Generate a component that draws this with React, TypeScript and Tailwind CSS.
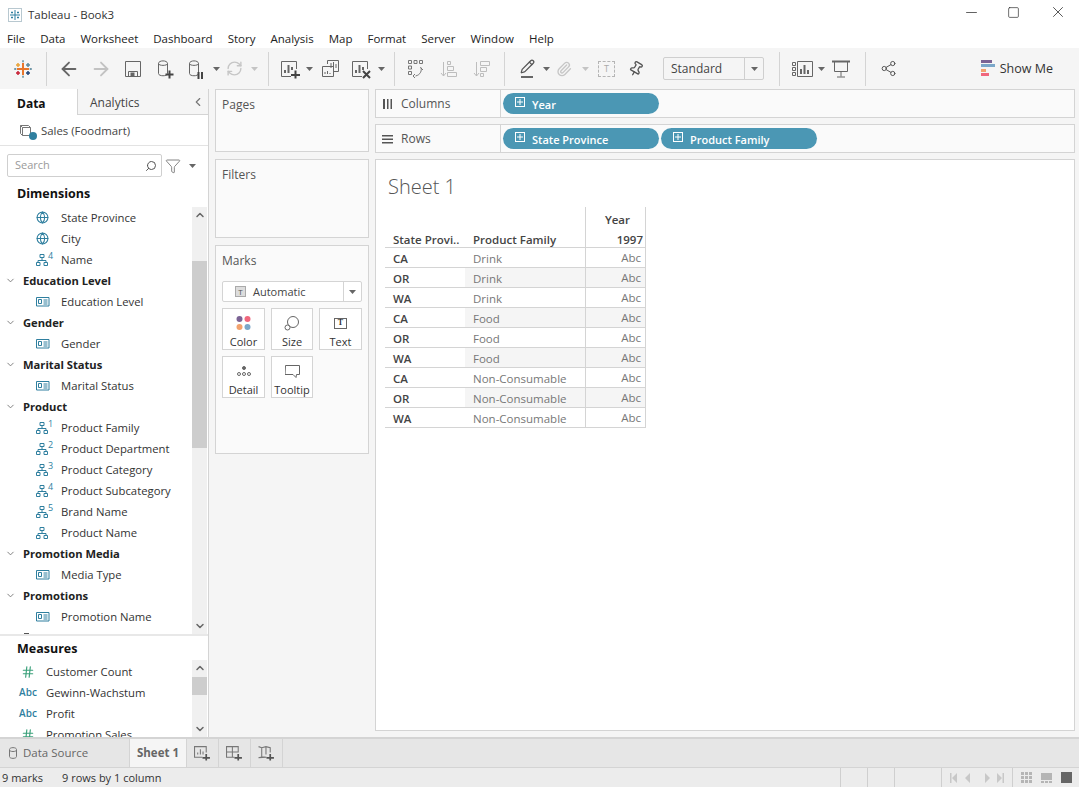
import { ChevronDown, ChevronLeft, ChevronUp, Minus, Square, X, Search, Filter, Globe, Hash, ArrowLeft, ArrowRight, RefreshCw, Pencil, Paperclip, Pin, Share2 } from 'lucide-react';

const font = { fontFamily: '"Open Sans", "Noto Sans", sans-serif' };

const Caret = ({ light }: { light?: boolean }) => (
  <svg width="7" height="4" viewBox="0 0 7 4" className="shrink-0"><path d="M0 0h7L3.500 4z" fill={light ? '#c4c4c4' : '#666'} /></svg>
);

const Sep = () => <div className="w-px h-[34px] bg-[#d4d4d4] shrink-0" />;

const Logo = () => (
  <svg width="18" height="18" viewBox="0 0 18 18" strokeWidth="1.500" fill="none">
    <path d="M9 3v12M3 9h12" stroke="#e8762b" strokeWidth="2" />
    <path d="M4 3v4M2 5h4" stroke="#e8a33a" />
    <path d="M14 3v4M12 5h4" stroke="#5b879b" />
    <path d="M4 11v4M2 13h4" stroke="#c72035" />
    <path d="M14 11v4M12 13h4" stroke="#1f447a" />
    <path d="M9 0v2.500M8 1.200h2M9 15.500V18M8 16.800h2" stroke="#7099a6" strokeWidth="1" />
    <path d="M0 9h2.500M1.200 8v2M15.500 9H18M16.800 8v2" stroke="#59879b" strokeWidth="1" />
  </svg>
);

const Snowflake = () => (
  <div className="w-[14px] h-[14px] border border-[#b8c8d0] bg-white flex items-center justify-center">
    <svg width="12" height="12" viewBox="0 0 12 12" stroke="#2f7f9f" strokeWidth="1" fill="none">
      <path d="M6 1v10M1 6h10M3 2.500v2M2 3.500h2M9 2.500v2M8 3.500h2M3 7.500v2M2 8.500h2M9 7.500v2M8 8.500h2" />
    </svg>
  </div>
);

const Cyl = ({ plus, pause }: { plus?: boolean; pause?: boolean }) => (
  <svg width="18" height="20" viewBox="0 0 18 20" fill="none" stroke="#666">
    <path d="M1.500 4.500c0-3.500 9-3.500 9 0v10c0 3-9 3-9 0zM1.500 4.500c0 2.500 9 2.500 9 0" />
    {plus && <path d="M8.500 15.500h8M12.500 11.500v8" stroke="#444" strokeWidth="2" />}
    {pause && <path d="M10.500 13v7M14 13v7" stroke="#444" strokeWidth="2" />}
  </svg>
);

const Bars = ({ mode }: { mode: 'plus' | 'x' | 'dup' }) => (
  <svg width="22" height="20" viewBox="0 0 22 20" fill="none" stroke="#666">
    {mode === 'dup' ? (
      <>
        <path d="M6.500 5V1.500h11v11H13" />
        <path d="M1.500 7.500h11v10h-11z" />
        <path d="M10 9V4M12.500 9V3M15 9V5M4 15v-2M6.500 15v-3M9 15v-1" />
      </>
    ) : (
      <>
        <path d="M11 17.500H1.500v-15h15V10" />
        <path d="M5 14v-3M8.500 14V6M12 11V8" strokeWidth="2" />
        {mode === 'plus' && <path d="M11 16h9M15.500 11.500v8" stroke="#444" strokeWidth="2" />}
        {mode === 'x' && <path d="M12 12l7 7M19 12l-7 7" stroke="#444" strokeWidth="2" />}
      </>
    )}
  </svg>
);

const SwapIcon = () => (
  <svg width="18" height="20" viewBox="0 0 18 20" fill="none" stroke="#777">
    <path d="M1.500 1.500h3v3h-3zM7 1.500h3v3H7zM12.500 1.500h3v3h-3zM1.500 7h3v3h-3zM1.500 12.500h3v3h-3zM13.500 8c2 3 0 8-5 9M8 19l-2-2 2-2M16 11l-2-2" />
  </svg>
);

const SortIcon = ({ flip }: { flip?: boolean }) => (
  <svg width="18" height="20" viewBox="0 0 18 20" fill="none" stroke="#bdbdbd">
    <path d="M3.500 3v14M1 14l2.500 3L6 14" />
    {flip ? (
      <path d="M7.500 2.500h9v4h-9zM7.500 8.500h6v4h-6zM7.500 14.500h3v3h-3z" />
    ) : (
      <path d="M7.500 2.500h3v3h-3zM7.500 7.500h6v4h-6zM7.500 13.500h9v4h-9z" />
    )}
  </svg>
);

const ShowMeChart = () => (
  <svg width="14" height="17" viewBox="0 0 14 17">
    <rect x="0" y="0" width="11" height="3" fill="#7b6394" />
    <rect x="0" y="4" width="14" height="3" fill="#7ba7c9" />
    <rect x="0" y="9" width="5" height="3" fill="#f2a26e" />
    <rect x="0" y="13" width="8" height="3" fill="#f0677d" />
  </svg>
);

const Hier = ({ n }: { n?: number }) => (
  <span className="relative w-[20px] h-[13px] flex items-end shrink-0">
    <svg width="12" height="12" viewBox="0 0 12 12" fill="none" stroke="#2f7f9f" strokeWidth="1">
      <path d="M4 .500h4v3H4zM.500 8.500h3.500v3H.500zM8 8.500h3.500v3H8zM6 3.500v3M2 8.500v-2h8v2" />
    </svg>
    {n && <span className="absolute left-[12px] -top-[2px] text-[9px] leading-[10px] text-[#2f7f9f]">{n}</span>}
  </span>
);

const Card = () => (
  <svg width="14" height="10" viewBox="0 0 14 10" fill="none" stroke="#2f7f9f" strokeWidth="1">
    <path d="M.500.500h12.500v8.500H.500zM2.500 2.500h3v4h-3zM7.500 3h4M7.500 5h4M7.500 7h4" />
  </svg>
);

type Field = { kind: 'group'; label: string } | { kind: 'globe' | 'card' | 'hier'; label: string; n?: number };

const dimensions: Field[] = [
  { kind: 'globe', label: 'State Province' },
  { kind: 'globe', label: 'City' },
  { kind: 'hier', label: 'Name', n: 4 },
  { kind: 'group', label: 'Education Level' },
  { kind: 'card', label: 'Education Level' },
  { kind: 'group', label: 'Gender' },
  { kind: 'card', label: 'Gender' },
  { kind: 'group', label: 'Marital Status' },
  { kind: 'card', label: 'Marital Status' },
  { kind: 'group', label: 'Product' },
  { kind: 'hier', label: 'Product Family', n: 1 },
  { kind: 'hier', label: 'Product Department', n: 2 },
  { kind: 'hier', label: 'Product Category', n: 3 },
  { kind: 'hier', label: 'Product Subcategory', n: 4 },
  { kind: 'hier', label: 'Brand Name', n: 5 },
  { kind: 'hier', label: 'Product Name' },
  { kind: 'group', label: 'Promotion Media' },
  { kind: 'card', label: 'Media Type' },
  { kind: 'group', label: 'Promotions' },
  { kind: 'card', label: 'Promotion Name' },
];

const measures = [
  { icon: 'hash', label: 'Customer Count' },
  { icon: 'abc', label: 'Gewinn-Wachstum' },
  { icon: 'abc', label: 'Profit' },
  { icon: 'hash', label: 'Promotion Sales' },
];

const rows = [
  ['CA', 'Drink'], ['OR', 'Drink'], ['WA', 'Drink'],
  ['CA', 'Food'], ['OR', 'Food'], ['WA', 'Food'],
  ['CA', 'Non-Consumable'], ['OR', 'Non-Consumable'], ['WA', 'Non-Consumable'],
];

const menu = ['File', 'Data', 'Worksheet', 'Dashboard', 'Story', 'Analysis', 'Map', 'Format', 'Server', 'Window', 'Help'];

const ScrollTrack = ({ thumbTop, thumbH }: { thumbTop: string; thumbH: string }) => (
  <div className="w-[15px] h-full bg-[#f0f0f0] flex flex-col items-center justify-between shrink-0 relative">
    <ChevronUp size={12} strokeWidth={3} color="#666" className="mt-[2px]" />
    <div className={`absolute left-0 w-full bg-[#cdcdcd] ${thumbTop} ${thumbH}`} />
    <ChevronDown size={12} strokeWidth={3} color="#666" className="mb-[2px]" />
  </div>
);

const Pill = ({ label }: { label: string }) => (
  <div className="w-[156px] h-[21px] rounded-full bg-[#4b97b4] flex items-center pl-[12px] text-white text-[11px] font-semibold">
    <span className="w-[10px] h-[10px] border border-white flex items-center justify-center mr-[7px] shrink-0 -mt-[3px]">
      <svg width="6" height="6" viewBox="0 0 6 6"><path d="M3 0v6M0 3h6" stroke="#fff" /></svg>
    </span>
    <span className="mt-[3px]">{label}</span>
  </div>
);

const Shelf = ({ icon, label, children }: { icon: React.ReactNode; label: string; children: React.ReactNode }) => (
  <div className="h-[29px] border border-[#d4d4d4] bg-[#fafafa] flex items-center">
    <div className="w-[125px] h-full border-r border-[#d4d4d4] flex items-center pl-[6px] gap-[8px] text-[12px] text-[#555] shrink-0">
      {icon}
      {label}
    </div>
    <div className="flex items-center gap-[2px] pl-[2px]">{children}</div>
  </div>
);

const MarkBtn = ({ label, children }: { label: string; children: React.ReactNode }) => (
  <div className="h-[42px] border border-[#d4d4d4] bg-white flex flex-col items-center text-[11px] text-[#333]">
    <div className="h-[26px] flex items-center justify-center pt-[2px]">{children}</div>
    <span className="leading-[14px]">{label}</span>
  </div>
);

export default function App() {
  return (
    <div className="w-[1079px] h-[787px] bg-[#f5f5f5] flex flex-col overflow-hidden text-[#333]" style={font}>
      {/* title + menu */}
      <div className="h-[30px] bg-white flex items-center pl-[8px] shrink-0">
        <Snowflake />
        <span className="ml-[6px] text-[11.500px] text-[#333]">Tableau - Book3</span>
        <div className="ml-auto flex items-center gap-[29px] pr-[12px] pb-[6px] text-[#222]">
          <span className="-mr-[2px] -ml-[2px] flex"><Minus size={17} strokeWidth={1} /></span>
          <Square size={13} strokeWidth={1.2} />
          <X size={18} strokeWidth={1} />
        </div>
      </div>
      <div className="h-[18px] bg-white flex items-center pl-[7px] gap-[15px] text-[11.500px] text-[#222] shrink-0">
        {menu.map((m) => <span key={m}>{m}</span>)}
      </div>

      {/* toolbar */}
      <div className="h-[41px] bg-[#f5f5f5] flex items-center shrink-0">
        <div className="w-[46px] flex justify-center"><Logo /></div>
        <Sep />
        <div className="flex items-center w-[221px]">
          <ArrowLeft size={22} color="#666" strokeWidth={2} className="ml-[11px]" />
          <ArrowRight size={22} color="#c2c2c2" strokeWidth={2} className="ml-[10px]" />
          <svg width="16" height="16" viewBox="0 0 16 16" fill="none" stroke="#666" className="ml-[13px]"><path d="M.500.500h15v15H.500zM3.500 15.500v-5h9v5" /><rect x="6" y="12" width="3" height="3" fill="#666" /></svg>
          <span className="ml-[16px] flex"><Cyl plus /></span>
          <span className="ml-[13px] flex"><Cyl pause /></span>
          <span className="ml-[7px]"><Caret /></span>
          <RefreshCw size={17} color="#c6c6c6" className="ml-[6px]" />
          <span className="ml-[8px]"><Caret light /></span>
        </div>
        <Sep />
        <div className="flex items-center pl-[11px] w-[125px]">
          <Bars mode="plus" />
          <span className="ml-[4px]"><Caret /></span>
          <span className="ml-[8px] flex"><Bars mode="dup" /></span>
          <span className="ml-[8px] flex"><Bars mode="x" /></span>
          <span className="ml-[5px]"><Caret /></span>
        </div>
        <Sep />
        <div className="flex items-center gap-[15px] pl-[12px] w-[109px]">
          <SwapIcon />
          <SortIcon />
          <SortIcon flip />
        </div>
        <Sep />
        <div className="flex items-center pl-[14px] w-[274px]">
          <div className="flex flex-col items-center w-[16px]">
            <Pencil size={15} color="#555" />
            <div className="w-[12px] h-[2px] bg-[#666] mt-[2px]" />
          </div>
          <span className="ml-[8px]"><Caret /></span>
          <Paperclip size={16} color="#c6c6c6" className="ml-[6px]" />
          <span className="ml-[10px]"><Caret light /></span>
          <div className="ml-[9px] w-[17px] h-[16px] border border-dashed border-[#b5b5b5] flex items-center justify-center text-[9px] text-[#aaa]">T</div>
          <Pin size={16} color="#555" className="ml-[13px] rotate-[30deg]" />
          <div className="ml-[19px] w-[101px] h-[23px] border border-[#cfcfcf] rounded-[2px] bg-[#f5f5f5] flex items-center text-[12px]">
            <span className="pl-[7px] pt-[1px] flex-1 text-[#444]">Standard</span>
            <div className="w-[19px] h-full border-l border-[#cfcfcf] flex items-center justify-center"><Caret /></div>
          </div>
        </div>
        <Sep />
        <div className="flex items-center pl-[12px] w-[85px]">
          <svg width="21" height="16" viewBox="0 0 21 16" fill="none" stroke="#666"><path d="M.500 1.500h3v3h-3zM.500 6.500h3v3h-3zM.500 11.500h3v3h-3zM5.500.500h15v15h-15z" /><path d="M9 13V8M12.500 13V4M16 13v-4" strokeWidth="2" /></svg>
          <span className="ml-[5px]"><Caret /></span>
          <svg width="18" height="18" viewBox="0 0 18 18" fill="none" stroke="#666" className="ml-[7px]"><path d="M0 1.500h18" strokeWidth="2" /><path d="M2.500 2v9.500h13V2M9 11.500v5M5 17h8" /></svg>
        </div>
        <Sep />
        <div className="pl-[14px]"><Share2 size={17} color="#555" strokeWidth={1.4} /></div>
        <div className="ml-auto pr-[26px] flex items-center gap-[6px] text-[12.500px] text-[#333]">
          <ShowMeChart />
          <span className="pt-[2px] -ml-[1px]">Show Me</span>
        </div>
      </div>

      {/* main */}
      <div className="flex-1 flex min-h-0">
        {/* data pane */}
        <div className="w-[209px] bg-white border-r border-[#d4d4d4] flex flex-col shrink-0 relative">
          <div className="h-[26px] flex shrink-0 text-[12px]">
            <div className="w-[77px] flex items-center pl-[17px] font-bold text-[#111] pt-[3px]">Data</div>
            <div className="flex-1 bg-[#f5f5f5] border-l border-b border-[#d4d4d4] flex items-center pl-[12px] text-[#444] pt-[3px]">
              Analytics
              <ChevronLeft size={14} color="#777" className="ml-auto mr-[3px] -mt-[3px]" />
            </div>
          </div>
          <div className="h-[31px] border-b border-[#e3e3e3] flex items-center pl-[19px] gap-[7px] text-[11.400px] text-[#444] shrink-0">
            <span className="relative w-[15px] h-[15px]">
              <svg width="15" height="15" viewBox="0 0 15 15" fill="none" stroke="#777"><path d="M1.500 2.500h8l2 2v8h-8l-2-2zM1.500 2.500l2 2h8M3.500 4.500v8" /></svg>
              <span className="absolute right-[-3px] bottom-[-2px] w-[8px] h-[8px] rounded-full bg-[#2f7f9f]" />
            </span>
            <span className="pt-[1px]">Sales (Foodmart)</span>
          </div>
          <div className="flex items-center pl-[7px] pt-[8px] shrink-0">
            <div className="w-[155px] h-[23px] border border-[#cfcfcf] rounded-[2px] flex items-center pl-[7px] pr-[4px] text-[11px] text-[#9a9a9a]">
              Search
              <Search size={12} color="#555" className="ml-auto -scale-x-100" />
            </div>
            <Filter size={16} color="#666" strokeWidth={1.2} className="ml-[3px]" />
            <span className="ml-[8px]"><Caret /></span>
          </div>
          <div className="h-[30px] pl-[17px] pt-[4px] flex items-center text-[12.500px] font-bold text-[#111] shrink-0">Dimensions</div>
          <div className="h-[427px] flex overflow-hidden shrink-0">
            <div className="flex-1 overflow-hidden">
              {dimensions.map((f, i) =>
                f.kind === 'group' ? (
                  <div key={i} className="h-[21px] flex items-center text-[11.200px] font-bold text-[#222]">
                    <ChevronDown size={11} color="#777" className="ml-[5px] mr-[7px]" />
                    <span className="pt-[1px]">{f.label}</span>
                  </div>
                ) : (
                  <div key={i} className="h-[21px] flex items-center text-[11.300px] text-[#333] pl-[36px]">
                    <span className="w-[25px] flex items-center shrink-0">
                      {f.kind === 'globe' && <Globe size={13} color="#2f7f9f" />}
                      {f.kind === 'card' && <Card />}
                      {f.kind === 'hier' && <Hier n={f.n} />}
                    </span>
                    <span className="pt-[1px]">{f.label}</span>
                  </div>
                )
              )}
              {/* top of the next group, cut off by the pane */}
              <div className="h-[7px] flex items-end pl-[24px]"><div className="w-[5px] h-[1px] bg-[#555]" /></div>
            </div>
            <ScrollTrack thumbTop="top-[54px]" thumbH="h-[187px]" />
            <div className="w-[1px]" />
          </div>
          <div className="h-[26px] border-t-2 border-[#e8e8e8] pl-[17px] pt-[2px] flex items-center text-[12.500px] font-bold text-[#111] shrink-0">Measures</div>
          <div className="flex-1 flex overflow-hidden min-h-0">
            <div className="flex-1 overflow-hidden pt-[1px]">
              {measures.map((m) => (
                <div key={m.label} className="h-[21px] flex items-center text-[11.300px] text-[#333]">
                  <span className="w-[46px] flex justify-center pl-[10px] shrink-0">
                    {m.icon === 'hash'
                      ? <Hash size={14} color="#3aa07a" />
                      : <span className="text-[10px] text-[#2f7f9f] font-semibold">Abc</span>}
                  </span>
                  <span className="pt-[1px]">{m.label}</span>
                </div>
              ))}
            </div>
            <ScrollTrack thumbTop="top-[17px]" thumbH="h-[18px]" />
            <div className="w-[1px]" />
          </div>
        </div>

        {/* cards */}
        <div className="w-[166px] flex flex-col pl-[6px] pr-[6px] shrink-0 gap-[7px]">
          <div className="h-[63px] border border-[#d4d4d4] bg-[#fafafa] px-[6px] pt-[6px] text-[12px] text-[#555] shrink-0">Pages</div>
          <div className="h-[79px] border border-[#d4d4d4] bg-[#fafafa] px-[6px] pt-[6px] text-[12px] text-[#555] shrink-0">Filters</div>
          <div className="h-[209px] border border-[#d4d4d4] bg-[#fafafa] px-[6px] pt-[6px] shrink-0">
            <div className="text-[12px] text-[#555]">Marks</div>
            <div className="mt-[11px] h-[21px] w-[140px] border border-[#d4d4d4] rounded-[2px] bg-white flex items-center text-[11px] text-[#444]">
              <span className="w-[11px] h-[11px] ml-[12px] mr-[7px] bg-[#ddd] border border-[#aaa] flex items-center justify-center text-[8px] leading-none text-[#555]">T</span>
              <span className="pt-[1px]">Automatic</span>
              <div className="ml-auto w-[18px] h-full border-l border-[#d4d4d4] flex items-center justify-center"><Caret /></div>
            </div>
            <div className="mt-[6px] grid grid-cols-[43px_42px_43px] gap-x-[6px] gap-y-[6px]">
              <MarkBtn label="Color">
                <svg width="16" height="15" viewBox="0 0 16 15">
                  <circle cx="3.500" cy="3" r="3" fill="#7b6394" />
                  <circle cx="11.500" cy="3" r="3" fill="#f0677d" />
                  <circle cx="3.500" cy="11" r="3" fill="#f2a26e" />
                  <circle cx="11.500" cy="11" r="3" fill="#7ba7c9" />
                </svg>
              </MarkBtn>
              <MarkBtn label="Size">
                <svg width="16" height="16" viewBox="0 0 16 16" fill="none" stroke="#666"><circle cx="9" cy="7" r="5.500" /><circle cx="3.500" cy="12.500" r="2.500" fill="#fff" /></svg>
              </MarkBtn>
              <MarkBtn label="Text">
                <div className="w-[13px] h-[11px] border border-[#666] flex items-center justify-center text-[8px] leading-none font-bold" style={{ fontFamily: '"Liberation Serif", serif' }}>T</div>
              </MarkBtn>
              <MarkBtn label="Detail">
                <svg width="14" height="12" viewBox="0 0 14 12" fill="none" stroke="#666"><circle cx="7" cy="3" r="1.500" fill="#666" /><circle cx="2" cy="9" r="1.500" /><circle cx="7" cy="9" r="1.500" /><circle cx="12" cy="9" r="1.500" /></svg>
              </MarkBtn>
              <MarkBtn label="Tooltip">
                <svg width="15" height="13" viewBox="0 0 15 13" fill="none" stroke="#666"><path d="M.500.500h14v9h-3l-.500 3-3-3h-8z" /></svg>
              </MarkBtn>
            </div>
          </div>
        </div>

        {/* shelves + view */}
        <div className="flex-1 flex flex-col pr-[4px] min-w-0 pb-[6px]">
          <div className="flex flex-col gap-[6px] mb-[6px] shrink-0">
            <Shelf label="Columns" icon={<svg width="11" height="10" viewBox="0 0 11 10"><path d="M1 0h2v10H1zM5 0h1.500v10H5zM8.500 0H10v10H8.500z" fill="#555" /></svg>}>
              <Pill label="Year" />
            </Shelf>
            <Shelf label="Rows" icon={<svg width="11" height="10" viewBox="0 0 11 10"><path d="M0 1h11v1.500H0zM0 4.500h11V6H0zM0 8h11v1.500H0z" fill="#555" /></svg>}>
              <Pill label="State Province" />
              <Pill label="Product Family" />
            </Shelf>
          </div>
          <div className="flex-1 bg-white border border-[#d4d4d4] pt-[10px] pl-[9px] min-h-0">
            <div className="h-[34px] pl-[3px] text-[20px] font-light text-[#555] flex items-center">Sheet 1</div>
            <div className="w-[261px] mt-[3px] text-[12px]">
              <div className="flex h-[41px] border-b border-[#d4d4d4]">
                <div className="w-[201px] flex items-end font-semibold text-[#444] border-r border-[#d4d4d4] pt-[1px]">
                  <span className="w-[80px] pl-[8px] whitespace-nowrap text-[11.500px] translate-y-[1px]">State Provi..</span>
                  <span className="pl-[8px] text-[11.500px] translate-y-[1px]">Product Family</span>
                </div>
                <div className="flex-1 border-r border-[#d4d4d4] flex flex-col text-[#444] font-semibold text-[11.500px] items-end pr-[2px]">
                  <span className="h-[21px] flex items-end pr-[13px]">Year</span>
                  <span className="h-[19px] flex items-end translate-y-[1px]">1997</span>
                </div>
              </div>
              {rows.map(([state, family], i) => (
                <div key={i} className="flex h-[20px] border-b border-[#d4d4d4]">
                  <div className="w-[80px] pl-[8px] flex items-center pt-[3px] font-semibold text-[#444] text-[11.500px]">{state}</div>
                  <div className={`w-[121px] pl-[8px] flex items-center pt-[3px] text-[#777] border-r border-[#d4d4d4] text-[11.500px] ${i % 2 === 1 ? 'bg-[#f5f5f5]' : ''}`}>{family}</div>
                  <div className={`flex-1 border-r border-[#d4d4d4] text-right pr-[4px] pt-[1px] text-[#777] text-[11.500px] leading-[17px] ${i % 2 === 1 ? 'bg-[#f5f5f5]' : ''}`}>Abc</div>
                </div>
              ))}
            </div>
          </div>
        </div>
      </div>

      {/* tab bar */}
      <div className="h-[30px] bg-[#e6e6e6] border-t-2 border-[#d4d4d4] flex shrink-0 text-[11.500px]">
        <div className="w-[129px] flex items-center pl-[9px] gap-[6px] text-[#666]">
          <svg width="8" height="12" viewBox="0 0 8 12" fill="none" stroke="#777"><path d="M.500 2.500c0-2.500 7-2.500 7 0v7c0 2.500-7 2.500-7 0zM.500 3c0 2 7 2 7 0" /></svg>
          Data Source
        </div>
        <div className="w-[58px] bg-[#f5f5f5] border-x border-[#d4d4d4] flex items-center justify-center font-bold text-[#666]">Sheet 1</div>
        <div className="w-[32px] border-r border-[#d4d4d4] flex items-center justify-center">
          <svg width="17" height="16" viewBox="0 0 16 15" fill="none" stroke="#777"><path d="M8 11.500H.500v-10h11V7M3.500 9V7M6 9V4M8.500 9V6" /><path d="M8 12h7M11.500 8.500v6" stroke="#555" strokeWidth="1.600" /></svg>
        </div>
        <div className="w-[32px] border-r border-[#d4d4d4] flex items-center justify-center">
          <svg width="17" height="16" viewBox="0 0 16 15" fill="none" stroke="#777"><path d="M8 11.500H.500v-10h11V7M.500 6.500h11M6 1.500v10" /><path d="M8 12h7M11.500 8.500v6" stroke="#555" strokeWidth="1.600" /></svg>
        </div>
        <div className="w-[32px] border-r border-[#d4d4d4] flex items-center justify-center">
          <svg width="17" height="16" viewBox="0 0 16 15" fill="none" stroke="#777"><path d="M.500 1.500l3 1 4-1 4 1V7M8 11.500l-4-.500-3.500 1zM3.500 2.500V11M7.500 1.500V9" /><path d="M8 12h7M11.500 8.500v6" stroke="#555" strokeWidth="1.600" /></svg>
        </div>
      </div>

      {/* status */}
      <div className="h-[20px] bg-[#ececec] border-t border-[#d4d4d4] flex items-center shrink-0 text-[11px] text-[#333]">
        <span className="pl-[2px] pt-[2px] w-[62px]">9 marks</span>
        <span className="pt-[2px]">9 rows by 1 column</span>
        <div className="ml-auto flex h-full">
          <div className="w-[27px] border-l border-[#cfcfcf]" />
          <div className="w-[27px] border-l border-[#cfcfcf]" />
          <div className="w-[47px] border-l border-[#cfcfcf]" />
          <div className="w-[71px] border-l border-[#cfcfcf] flex items-center justify-center gap-[8px]">
            <svg width="54" height="10" viewBox="0 0 54 10" fill="#c8c8c8">
              <path d="M0 0h1.500v10H0zM7 0v10L2 5zM20 0v10l-5-5zM35 0v10l5-5zM47 0v10l5-5zM52.500 0H54v10h-1.500z" />
            </svg>
          </div>
          <div className="w-[67px] border-l border-[#cfcfcf] flex items-center pl-[8px] gap-[9px]">
            <div className="grid grid-cols-3 gap-[1px] w-[11px]">
              {Array.from({ length: 9 }).map((_, i) => <div key={i} className="w-[3px] h-[3px] bg-[#b5b5b5]" />)}
            </div>
            <div className="flex flex-col gap-[1px]">
              <div className="w-[11px] h-[7px] bg-[#b5b5b5]" />
              <div className="flex gap-[1px]"><div className="w-[3px] h-[2px] bg-[#b5b5b5]" /><div className="w-[3px] h-[2px] bg-[#b5b5b5]" /><div className="w-[3px] h-[2px] bg-[#b5b5b5]" /></div>
            </div>
            <div className="w-[11px] h-[11px] bg-[#666]" />
          </div>
        </div>
      </div>
    </div>
  );
}
